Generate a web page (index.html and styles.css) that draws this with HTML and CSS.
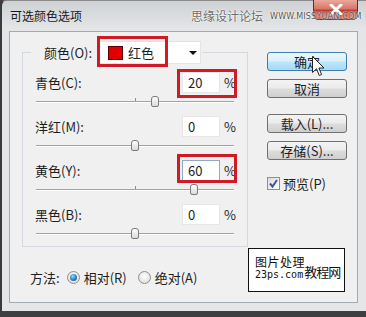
FILE: index.html
```html
<!DOCTYPE html>
<html lang="zh-CN">
<head>
  <meta charset="UTF-8" />
  <meta name="viewport" content="width=device-width, initial-scale=1.0" />
  <title>可选颜色选项</title>
  <link rel="stylesheet" href="styles.css">
</head>
<body>

  <div class="window">

    <!-- Title bar -->
    <div class="titlebar">
      <span class="title">可选颜色选项</span>
      <button class="close" aria-label="关闭">
        <svg width="14" height="11" viewBox="0 0 14 11">
          <path d="M2 1 L12 10 M12 1 L2 10" stroke="#fff" stroke-width="3" stroke-linecap="round" />
        </svg>
      </button>
      <div class="site-mark">
        <span class="site-cn">思缘设计论坛</span>
        <span class="site-url">WWW.MISSYUAN.COM</span>
      </div>
    </div>

    <!-- Dialog body -->
    <div class="client">
      <div class="main">
        <fieldset class="group">
          <legend>
            <span class="legend-label">颜色(O):</span>
            <div class="select">
              <span class="swatch"></span>
              <span class="select-text">红色</span>
              <span class="arrow"></span>
            </div>
          </legend>

          <div class="channel">
            <div class="channel-row">
              <span class="channel-label">青色(C):</span>
              <input class="num" type="text" value="20" />
              <span class="pct">%</span>
            </div>
            <div class="slider"><div class="track"><span class="thumb" style="left: 60%"></span></div></div>
          </div>

          <div class="channel">
            <div class="channel-row">
              <span class="channel-label">洋红(M):</span>
              <input class="num" type="text" value="0" />
              <span class="pct">%</span>
            </div>
            <div class="slider"><div class="track"><span class="thumb" style="left: 50%"></span></div></div>
          </div>

          <div class="channel">
            <div class="channel-row">
              <span class="channel-label">黄色(Y):</span>
              <input class="num focused" type="text" value="60" />
              <span class="pct">%</span>
            </div>
            <div class="slider"><div class="track"><span class="thumb" style="left: 80%"></span></div></div>
          </div>

          <div class="channel">
            <div class="channel-row">
              <span class="channel-label">黑色(B):</span>
              <input class="num" type="text" value="0" />
              <span class="pct">%</span>
            </div>
            <div class="slider"><div class="track"><span class="thumb" style="left: 50%"></span></div></div>
          </div>
        </fieldset>

        <div class="method">
          <span class="method-label">方法:</span>
          <label class="radio-item"><span class="radio checked"></span>相对(R)</label>
          <label class="radio-item"><span class="radio"></span>绝对(A)</label>
        </div>
      </div>

      <div class="side">
        <button class="btn default">确定</button>
        <button class="btn">取消</button>
        <button class="btn load">载入(L)...</button>
        <button class="btn">存储(S)...</button>
        <label class="check-item">
          <span class="checkbox">
            <svg width="11" height="11" viewBox="0 0 11 11">
              <path d="M2 5.5 L4.5 8.5 L9 2" fill="none" stroke="#3d5a98" stroke-width="2" />
            </svg>
          </span>
          预览(P)
        </label>
      </div>

      <!-- annotations laid over the dialog -->
      <div class="mark mark-color"></div>
      <div class="mark mark-cyan"></div>
      <div class="mark mark-yellow"></div>

      <div class="stamp">
        <span class="stamp-top">图片处理</span>
        <span class="stamp-bottom"><span class="stamp-url">23ps.com</span><span class="stamp-big">教程网</span></span>
      </div>

      <svg class="cursor" width="13" height="21" viewBox="0 0 13 21">
        <path d="M0.5 0.5 L0.5 16.5 L4.5 12.8 L7.3 19.5 L9.6 18.5 L6.9 12 L12 12 Z" fill="#fff" stroke="#222" stroke-width="1" />
      </svg>
    </div>

  </div>

</body>
</html>
```

FILE: styles.css
```css
* {
  box-sizing: border-box;
}

body {
  margin: 0;
  background-color: #3f3f3f;
  font-family: "Noto Sans CJK SC", "Noto Sans", sans-serif;
  font-size: 13px;
  color: #1e1e1e;
}

.window {
  position: relative;
  width: 366px;
  height: 311px;
  border-left: 2px solid #3a3a3a;
  border-top: 1px solid #8a8a8a;
  border-radius: 6px 0 0 0;
  background: linear-gradient(to bottom, #cfd2d5 0, #e3e5e7 28px, #e4e6e8 100%);
}

/* title bar */

.titlebar {
  display: flex;
  align-items: flex-start;
  height: 30px;
  padding-left: 8px;
}

.title {
  margin-top: 6px;
  font-size: 12px;
  line-height: 18px;
  color: #1a1a1a;
}

.close {
  display: flex;
  align-items: center;
  justify-content: center;
  width: 45px;
  height: 20px;
  margin: -1px 8px 0 auto;
  padding: 0;
  border: 1px solid #6e2a22;
  border-top: none;
  border-radius: 0 0 5px 5px;
  background: linear-gradient(to bottom, #e9a99c 0, #d8786a 45%, #c2392c 55%, #d26a52 100%);
}

.site-mark {
  position: absolute;
  top: 6px;
  left: 189px;
  display: flex;
  align-items: center;
  gap: 7px;
  color: #6d6d6d;
  text-shadow: 0 0 2px #fff, 0 0 2px #fff;
}

.site-cn {
  font-size: 12px;
  line-height: 18px;
}

.site-url {
  font-family: "DejaVu Sans", sans-serif;
  font-size: 8px;
  letter-spacing: 0.2px;
  margin-top: 1px;
  color: #555;
}

/* client area */

.client {
  position: relative;
  display: flex;
  width: 349px;
  height: 272px;
  margin-left: 7px;
  border: 1px solid #a3abb2;
  background-color: #f0f0f0;
}

.main {
  width: 238px;
  padding: 9px 0 0 12px;
}

.group {
  width: 226px;
  margin: 0;
  padding: 8px 10px 0 12px;
  border: 1px solid #d3d9de;
}

.group legend {
  display: flex;
  align-items: center;
  margin-left: -4px;
  padding: 0 1px 0 13px;
}

.legend-label {
  margin-right: 6px;
}

.select {
  display: flex;
  align-items: center;
  width: 103px;
  height: 23px;
  padding-left: 9px;
  border: 1px solid #e4e4e4;
  background-color: #fff;
}

.swatch {
  width: 15px;
  height: 14px;
  border: 1px solid #5a0000;
  background-color: #e00000;
  margin-right: 5px;
}

.select-text {
  flex: 1;
}

.arrow {
  width: 0;
  height: 0;
  margin-right: 3px;
  border-left: 4px solid transparent;
  border-right: 4px solid transparent;
  border-top: 4px solid #111;
}

.channel-row {
  display: flex;
  align-items: center;
  height: 21px;
}

.channel-label {
  flex: 1;
}

.num {
  width: 38px;
  height: 21px;
  padding: 0 0 0 5px;
  border: 1px solid #e6e6e6;
  background-color: #fff;
  font-family: inherit;
  font-size: 13px;
  color: #1e1e1e;
}

.num.focused {
  border-color: #8fa9c9;
}

.pct {
  width: 16px;
  text-align: right;
  margin-right: 1px;
}

.slider {
  height: 23px;
  padding: 8px 3px 0 1px;
}

.channel:last-child .slider {
  height: 21px;
}

.track {
  position: relative;
  height: 2px;
  border-top: 1px solid #a2a2a2;
  border-bottom: 1px solid #ffffff;
}

.track::before {
  content: "";
  position: absolute;
  left: 50%;
  top: -4px;
  width: 1px;
  height: 3px;
  background-color: #8c8c8c;
}

.thumb {
  position: absolute;
  top: -6px;
  width: 8px;
  height: 11px;
  margin-left: -4px;
  border: 1px solid #7c7c7c;
  border-radius: 3px 3px 2px 2px;
  background: linear-gradient(to bottom, #fdfdfd, #dadada);
}

/* method radios */

.method {
  display: flex;
  align-items: center;
  height: 20px;
  margin-top: 20px;
  padding-left: 8px;
}

.method-label {
  margin-right: 7px;
}

.radio-item {
  display: flex;
  align-items: center;
  margin-right: 11px;
}

.radio {
  position: relative;
  width: 13px;
  height: 13px;
  margin-right: 4px;
  border: 1px solid #8e8f8f;
  border-radius: 50%;
  background: radial-gradient(circle at 50% 40%, #ffffff, #d6d6d6);
}

.radio.checked::after {
  content: "";
  position: absolute;
  left: 2px;
  top: 2px;
  width: 7px;
  height: 7px;
  border-radius: 50%;
  background: radial-gradient(circle at 40% 35%, #9fd6f8, #2a7cc2 55%, #184d82);
}

/* right column */

.side {
  display: flex;
  flex-direction: column;
  align-items: flex-start;
  padding: 20px 0 0 19px;
}

.btn {
  width: 80px;
  height: 19px;
  margin-bottom: 8px;
  padding: 0;
  border: 1px solid #707070;
  border-radius: 3px;
  background: linear-gradient(to bottom, #f3f3f3 0, #ebebeb 48%, #dddddd 52%, #cfcfcf 100%);
  font-family: inherit;
  font-size: 13px;
  line-height: 17px;
  color: #1e1e1e;
}

.btn.default {
  border-color: #3c7fb1;
  background: linear-gradient(to bottom, #eaf6fd 0, #d9f0fc 48%, #bee6fd 52%, #a7d9f5 100%);
}

.btn.load {
  margin-top: 8px;
}

.check-item {
  display: flex;
  align-items: center;
  margin-top: 6px;
}

.checkbox {
  display: flex;
  align-items: center;
  justify-content: center;
  width: 13px;
  height: 13px;
  margin-right: 3px;
  border: 1px solid #8f8f8f;
  background: linear-gradient(to bottom right, #dcdcdc, #fbfbfb);
}

/* overlays */

.mark {
  position: absolute;
  border: 3px solid #d01b24;
}

.mark-color {
  left: 87px;
  top: 4px;
  width: 71px;
  height: 31px;
}

.mark-cyan {
  left: 167px;
  top: 37px;
  width: 60px;
  height: 29px;
}

.mark-yellow {
  left: 167px;
  top: 122px;
  width: 60px;
  height: 29px;
}

.stamp {
  position: absolute;
  left: 238px;
  top: 216px;
  width: 97px;
  height: 44px;
  padding: 6px 0 0 6px;
  border: 1px solid #111;
  background-color: #fff;
  color: #111;
  white-space: nowrap;
}

.stamp-top {
  display: block;
  font-size: 12px;
  line-height: 14px;
  letter-spacing: 0.5px;
}

.stamp-bottom {
  display: flex;
  align-items: flex-end;
}

.stamp-url {
  font-family: "DejaVu Sans Mono", monospace;
  font-size: 10px;
  line-height: 12px;
  margin-bottom: 3px;
}

.stamp-big {
  font-size: 13px;
  line-height: 16px;
  letter-spacing: -1px;
  margin: -6px 0 4px 1px;
}

.cursor {
  position: absolute;
  left: 302px;
  top: 24px;
}
```
